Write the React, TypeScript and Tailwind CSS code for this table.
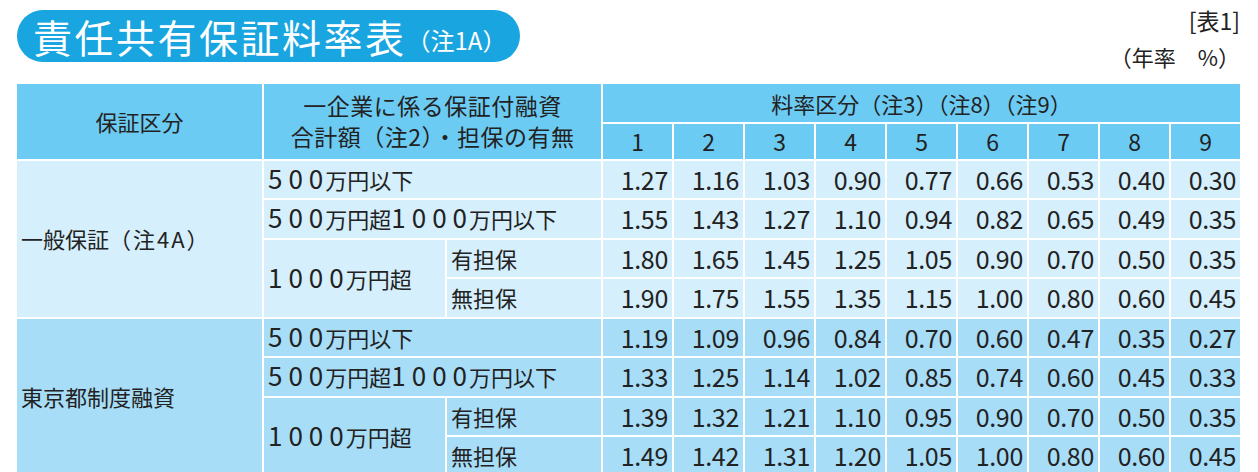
import React from "react"

const FONT = "font-['Noto_Sans_CJK_JP','Noto_Sans',sans-serif]"

const GENERAL = [
  ["1.27", "1.16", "1.03", "0.90", "0.77", "0.66", "0.53", "0.40", "0.30"],
  ["1.55", "1.43", "1.27", "1.10", "0.94", "0.82", "0.65", "0.49", "0.35"],
  ["1.80", "1.65", "1.45", "1.25", "1.05", "0.90", "0.70", "0.50", "0.35"],
  ["1.90", "1.75", "1.55", "1.35", "1.15", "1.00", "0.80", "0.60", "0.45"],
]

const TOKYO = [
  ["1.19", "1.09", "0.96", "0.84", "0.70", "0.60", "0.47", "0.35", "0.27"],
  ["1.33", "1.25", "1.14", "1.02", "0.85", "0.74", "0.60", "0.45", "0.33"],
  ["1.39", "1.32", "1.21", "1.10", "0.95", "0.90", "0.70", "0.50", "0.35"],
  ["1.49", "1.42", "1.31", "1.20", "1.05", "1.00", "0.80", "0.60", "0.45"],
]

const cell = "border-2 border-white"
const label = `${cell} text-[22px]`

// digits in the labels are set large and wide, like the printed table
function D({ children }: { children: string }) {
  return <span className="mr-[-4px] text-[26px] leading-none tracking-[6px]">{children}</span>
}

function Rates({ values }: { values: string[] }) {
  return (
    <>
      {values.map((v, i) => (
        <td key={i} className={`${cell} pr-[4px] text-right text-[25px] tracking-[-0.3px]`}>{v}</td>
      ))}
    </>
  )
}

function Section({ name, rows, bg }: { name: React.ReactNode; rows: string[][]; bg: string }) {
  return (
    <>
      <tr className={`h-[38px] ${bg}`}>
        <td rowSpan={4} className={`${cell} pl-1 text-[22px]`}>{name}</td>
        <td colSpan={2} className={`${label} pl-1`}><D>500</D>万円以下</td>
        <Rates values={rows[0]} />
      </tr>
      <tr className={`h-[38px] ${bg}`}>
        <td colSpan={2} className={`${label} pl-1`}><D>500</D>万円超<D>1000</D>万円以下</td>
        <Rates values={rows[1]} />
      </tr>
      <tr className={`h-[38px] ${bg}`}>
        <td rowSpan={2} className={`${label} pl-1`}><D>1000</D>万円超</td>
        <td className={`${label} pl-1`}>有担保</td>
        <Rates values={rows[2]} />
      </tr>
      <tr className={`h-[38px] ${bg}`}>
        <td className={`${label} pl-1`}>無担保</td>
        <Rates values={rows[3]} />
      </tr>
    </>
  )
}

export default function App() {
  return (
    <div className={`w-[1258px] h-[472px] overflow-hidden bg-white text-[#222] ${FONT}`}>
      {/* ── Title bar ── */}
      <div className="flex h-[82px] items-start justify-between pl-[17px] pr-[18px] pt-[10px]">
        <div className="flex h-[52px] w-[503px] items-center rounded-full bg-[#19a5df] pl-[16px] text-white">
          <span className="text-[39px] leading-none tracking-[2.5px]">責任共有保証料率表</span>
          <span className="mt-2 text-[24px] leading-none">（注1A）</span>
        </div>
        <div className="-mt-2 flex flex-col items-end text-[22px] leading-[36px]">
          <span className="text-[23px]">[表1]</span>
          <span>（年率　%）</span>
        </div>
      </div>

      {/* ── Rate table ── */}
      <table className="ml-[15px] w-[1226px] table-fixed border-collapse">
        <colgroup>
          <col className="w-[247px]" />
          <col className="w-[183px]" />
          <col className="w-[156px]" />
          {Array.from({ length: 9 }).map((_, i) => (
            <col key={i} className="w-[71px]" />
          ))}
        </colgroup>
        <thead>
          <tr className="h-[40px] bg-[#6ccbf3]">
            <th rowSpan={2} className={`${cell} text-[22px] font-normal`}>保証区分</th>
            <th rowSpan={2} colSpan={2} className={`${cell} text-[23px] font-normal leading-[31px] tracking-[0.5px]`}>
              一企業に係る保証付融資<br />合計額（注2）・担保の有無
            </th>
            <th colSpan={9} className={`${cell} text-[22px] font-normal`}>料率区分（注3）（注8）（注9）</th>
          </tr>
          <tr className="h-[36px] bg-[#6ccbf3]">
            {Array.from({ length: 9 }).map((_, i) => (
              <th key={i} className={`${cell} text-[23px] font-normal`}>{i + 1}</th>
            ))}
          </tr>
        </thead>
        <tbody>
          <Section name={<>一般保証<span className="tracking-[2px]">（注4A）</span></>} rows={GENERAL} bg="bg-[#d5effc]" />
          <Section name="東京都制度融資" rows={TOKYO} bg="bg-[#a8ddf8]" />
          <tr className="h-[38px] bg-[#d5effc]">
            <td className={`${label} pl-1 pt-[2px] align-top leading-[21px]`}>当座貸越根保証</td>
            <td colSpan={2} className={cell}></td>
            {Array.from({ length: 9 }).map((_, i) => (
              <td key={i} className={cell}></td>
            ))}
          </tr>
        </tbody>
      </table>
    </div>
  )
}
